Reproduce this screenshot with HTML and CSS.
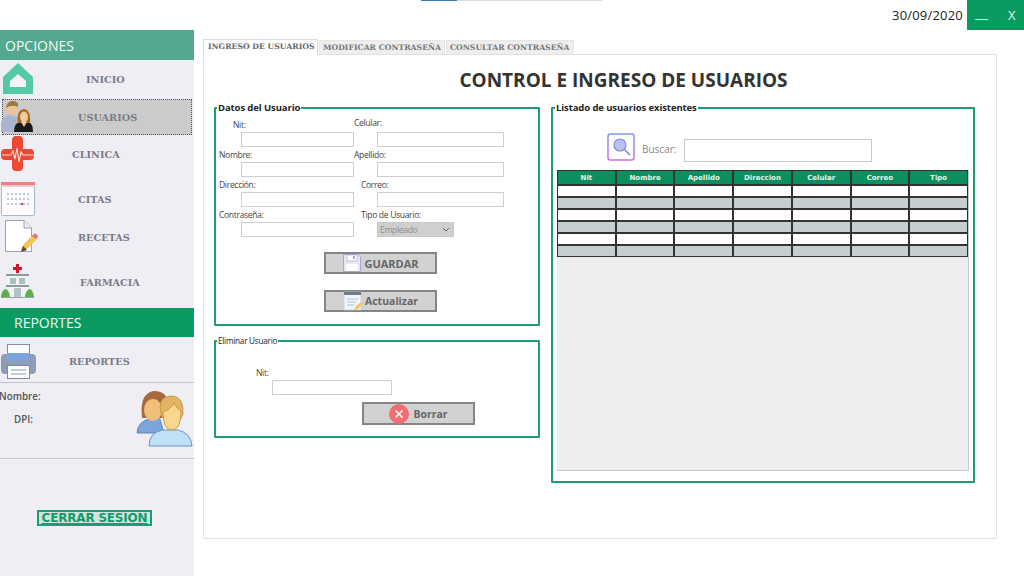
FILE: index.html
```html
<!DOCTYPE html>
<html lang="es">
<head>
<meta charset="utf-8">
<title>Control e ingreso de usuarios</title>
<link rel="stylesheet" href="styles.css">
</head>
<body>
<header class="topbar">
  <div class="sliver"><span class="sliver-blue"></span><span class="sliver-gray"></span></div>
  <div class="date">30/09/2020</div>
  <div class="winbtns"><span class="win-min">__</span><span class="win-close">X</span></div>
</header>
<div class="app">
  <aside class="sidebar">
    <div class="side-head side-head-opciones">OPCIONES</div>
    <div class="nav-item">
      <svg class="nav-icon" viewBox="0 0 40 38"><path d="M18 3 L33 17 V34 H3 V17 Z" fill="#55c8a8"/><path d="M18 14 L26 21 V27 H10 V21 Z" fill="#f4f4f8"/></svg>
      <span class="nav-label l-inicio">INICIO</span>
    </div>
    <div class="nav-item nav-active">
      <svg class="nav-icon" viewBox="0 0 40 36"><path d="M1 33 V23 Q3 17 10 16 L18 18 L20 33 Z" fill="#a9b4cf"/><circle cx="12" cy="10" r="6" fill="#e9c39a"/><path d="M6 9 Q7 1 14 2 Q19 3 18 8 Q12 5 6 9Z" fill="#9c7a3c"/><path d="M14 33 Q14 24 20 23 L29 23 Q33 25 33 33 Z" fill="#1b1b1b"/><path d="M18 24 Q16 11 24 10 Q31 11 30 24 Z" fill="#a9691f"/><ellipse cx="24" cy="18" rx="4" ry="5.5" fill="#f2c9a0"/><path d="M21 23 L24 28 L27 23 Z" fill="#f2c9a0"/></svg>
      <span class="nav-label l-usuarios">USUARIOS</span>
    </div>
    <div class="nav-item">
      <svg class="nav-icon" viewBox="0 0 40 38"><path d="M12 5 Q12 1 16 1 H19 Q23 1 23 5 V14 H30 Q34 14 34 18 V21 Q34 25 30 25 H23 V32 Q23 36 19 36 H16 Q12 36 12 32 V25 H5 Q1 25 1 21 V18 Q1 14 5 14 H12 Z" fill="#ea4a33"/><path d="M2 20 H11 L13 16 L15 24 L17 13 L19 27 L21 17 L23 20 H34" fill="none" stroke="#fbe0d8" stroke-width="1.1"/></svg>
      <span class="nav-label l-clinica">CLINICA</span>
    </div>
    <div class="nav-item nav-gap">
      <svg class="nav-icon" viewBox="0 0 40 38"><rect x="1.500" y="2.500" width="33" height="33" rx="1" fill="#fcfcfe" stroke="#a9b6c6"/><rect x="1" y="2" width="34" height="3" fill="#ee7f86"/><rect x="1" y="5" width="34" height="2" fill="#f6c9cc"/><path d="M7 14 H29 M7 19 H29 M7 24 H29" stroke="#b9cbd6" stroke-width="2" stroke-dasharray="2 2"/><rect x="21" y="23" width="2" height="2" fill="#d8434a"/></svg>
      <span class="nav-label l-citas">CITAS</span>
    </div>
    <div class="nav-item">
      <svg class="nav-icon" viewBox="0 0 40 38"><path d="M5.500 2.500 H24 L31.500 10 V33.500 H5.500 Z" fill="#fff" stroke="#9aa0ad"/><path d="M24 2.500 V10 H31.500" fill="#eef0f3" stroke="#9aa0ad"/><path d="M21 33 L23 27 L33 17 L37 21 L27 31 Z" fill="#f1c64e"/><path d="M32 18 L34 16 Q35 15 36 16 L38 18 Q38 19 37 20 L36 21 Z" fill="#e2737a"/><path d="M21 34 L23 28 L27 32 Z" fill="#5a4a2a"/></svg>
      <span class="nav-label l-recetas">RECETAS</span>
    </div>
    <div class="nav-item nav-gap">
      <svg class="nav-icon" viewBox="0 0 40 38"><path d="M16 1 h3 v3 h3 v3 h-3 v3 h-3 v-3 h-3 v-3 h3 Z" fill="#d4142a"/><rect x="6" y="11" width="23" height="2" fill="#8d9aa0"/><rect x="8" y="13" width="19" height="18" fill="#f2f3f4"/><rect x="10" y="15" width="6" height="6" fill="#a8bfc0"/><rect x="19" y="15" width="6" height="6" fill="#a8bfc0"/><rect x="6" y="22" width="23" height="2" fill="#8d9aa0"/><rect x="14" y="25" width="7" height="9" fill="#b3c3c6"/><path d="M1 34 Q2 26 6 26 Q9 27 10 34 Z M25 34 Q26 26 30 26 Q33 27 34 34 Z" fill="#5fb04a"/><rect x="1" y="34" width="33" height="1" fill="#9aa5a8"/></svg>
      <span class="nav-label l-farmacia">FARMACIA</span>
    </div>
    <div class="side-head side-head-reportes">REPORTES</div>
    <div class="nav-item nav-report">
      <svg class="nav-icon" viewBox="0 0 40 38"><rect x="7.500" y="1.500" width="22" height="14" fill="#fafbfd" stroke="#7f8ca6"/><rect x="1" y="11" width="35" height="20" rx="4" fill="#8e9cb8"/><path d="M7 10 H30 V15 Q30 18 27 18 H10 Q7 18 7 15 Z" fill="#7ba3dc"/><rect x="7.500" y="22.500" width="22" height="13" fill="#fafbfd" stroke="#7f8ca6"/><path d="M11 27 H26 M11 31 H26" stroke="#8e9cb8"/></svg>
      <span class="nav-label l-reportes">REPORTES</span>
    </div>
    <div class="user-info">
      <div class="user-text">
        <div class="user-nombre">Nombre:</div>
        <div class="user-dpi">DPI:</div>
      </div>
      <svg class="user-icon" viewBox="0 0 58 58">
        <path d="M1 43 Q2 31 14 29 H24 L28 43 Z" fill="#7ba6dc" stroke="#5d86bb"/>
        <path d="M6 28 Q3 3 18 1 Q30 1 32 12 L26 28 Z" fill="#a8693c"/>
        <ellipse cx="17" cy="20" rx="9" ry="11" fill="#f0bf7c"/>
        <path d="M13 56 Q13 43 26 40 H42 Q55 43 56 56 Z" fill="#bfe0f6" stroke="#6b93c4"/>
        <path d="M25 24 Q21 8 34 6 Q48 5 47 24 L44 30 H28 Z" fill="#e3b463" stroke="#c89a4c"/>
        <path d="M27 22 Q34 20 38 13 Q41 19 45 21 Q45 40 36 40 Q27 40 27 22 Z" fill="#fbd68f" stroke="#c89a4c"/>
      </svg>
    </div>
    <div class="logout"><a class="logout-link" href="#">CERRAR SESION</a></div>
  </aside>

  <main class="main">
    <nav class="tabs">
      <span class="tab tab-active">INGRESO DE USUARIOS</span>
      <span class="tab">MODIFICAR CONTRASEÑA</span>
      <span class="tab">CONSULTAR CONTRASEÑA</span>
    </nav>
    <section class="panel">
      <h1 class="title">CONTROL E INGRESO DE USUARIOS</h1>
      <div class="columns">
        <div class="col-left">
          <fieldset class="box box-datos">
            <legend class="legend-bold">Datos del Usuario</legend>
            <div class="form-grid">
              <label class="lbl-l lbl-nit">Nit:</label><label class="lbl-r lbl-up">Celular:</label>
              <input class="in-l" type="text"><input class="in-r" type="text">
              <label class="lbl-l">Nombre:</label><label class="lbl-r">Apellido:</label>
              <input class="in-l" type="text"><input class="in-r" type="text">
              <label class="lbl-l">Dirección:</label><label class="lbl-r lbl-shift">Correo:</label>
              <input class="in-l" type="text"><input class="in-r" type="text">
              <label class="lbl-l">Contraseña:</label><label class="lbl-r lbl-shift">Tipo de Usuario:</label>
              <input class="in-l" type="text">
              <div class="select"><span>Empleado</span><svg class="chev" viewBox="0 0 8 5"><path d="M1 1 L4 4 L7 1" fill="none" stroke="#666" stroke-width="1"/></svg></div>
            </div>
            <div class="btn-stack">
              <button class="btn" type="button">
                <svg class="btn-icon" viewBox="0 0 20 20"><path d="M1.500 1.500 H16 L18.500 4 V18.500 H1.500 Z" fill="#e6e6f6" stroke="#a9a9d8"/><rect x="5" y="2" width="10" height="6" fill="#fff" stroke="#a9a9d8" stroke-width=".7"/><rect x="11" y="3" width="2" height="3" fill="#a9a9d8"/><rect x="4" y="11" width="12" height="7" fill="#fff"/></svg>
                GUARDAR
              </button>
              <button class="btn" type="button">
                <svg class="btn-icon" viewBox="0 0 20 20"><rect x="1" y="1" width="17" height="18" fill="#f3f5fa" stroke="#c3c9d6" stroke-width=".7"/><rect x="1" y="1" width="17" height="3" fill="#6d7890"/><path d="M4 8 H15 M4 11 H13 M4 14 H11" stroke="#9fc1de"/><path d="M11 19 L13 15 L18 11 L20 13 L15 18 Z" fill="#f0c668"/></svg>
                <span class="btn-small">Actualizar</span>
              </button>
            </div>
          </fieldset>
          <fieldset class="box box-eliminar">
            <legend class="legend-thin">Eliminar Usuario</legend>
            <label class="del-label">Nit:</label>
            <input class="del-input" type="text">
            <div class="del-btn-row">
              <button class="btn btn-del" type="button">
                <svg class="btn-icon-del" viewBox="0 0 20 20"><circle cx="10" cy="10" r="10" fill="#ef6f73"/><path d="M6.500 6.500 L13.500 13.500 M13.500 6.500 L6.500 13.500" stroke="#fff" stroke-width="1.500"/></svg>
                <span class="btn-small">Borrar</span>
              </button>
            </div>
          </fieldset>
        </div>
        <fieldset class="box box-lista">
          <legend class="legend-bold">Listado de usuarios existentes</legend>
          <div class="search-row">
            <span class="search-btn"><svg class="search-icon" viewBox="0 0 28 28"><defs><linearGradient id="sg" x1="0" y1="0" x2="0" y2="1"><stop offset="0" stop-color="#7b9be8"/><stop offset="1" stop-color="#d06ce8"/></linearGradient></defs><rect x="1" y="1" width="26" height="26" rx="2.500" fill="#fff" stroke="url(#sg)" stroke-width="1.500"/><circle cx="13" cy="12" r="6" fill="#b7c2f4" stroke="#7f8cd8" stroke-width="1.200"/><path d="M17.500 16.500 L23 22" stroke="#7f7fb8" stroke-width="1.500"/></svg></span>
            <label class="search-label">Buscar:</label>
            <input class="search-input" type="text">
          </div>
          <div class="grid-wrap">
            <table class="users">
              <thead><tr><th>Nit</th><th>Nombre</th><th>Apellido</th><th>Direccion</th><th>Celular</th><th>Correo</th><th>Tipo</th></tr></thead>
              <tbody>
                <tr><td></td><td></td><td></td><td></td><td></td><td></td><td></td></tr>
                <tr class="alt"><td></td><td></td><td></td><td></td><td></td><td></td><td></td></tr>
                <tr><td></td><td></td><td></td><td></td><td></td><td></td><td></td></tr>
                <tr class="alt"><td></td><td></td><td></td><td></td><td></td><td></td><td></td></tr>
                <tr><td></td><td></td><td></td><td></td><td></td><td></td><td></td></tr>
                <tr class="alt"><td></td><td></td><td></td><td></td><td></td><td></td><td></td></tr>
              </tbody>
            </table>
          </div>
        </fieldset>
      </div>
    </section>
  </main>
</div>
</body>
</html>
```

FILE: styles.css
```css
* { box-sizing: border-box; }
html, body { margin: 0; padding: 0; }
body {
  width: 1024px; height: 576px; overflow: hidden; background: #fff;
  font-family: "Open Sans", "Liberation Sans", sans-serif; color: #444;
  display: flex; flex-direction: column;
}
.topbar { height: 30px; display: flex; align-items: center; justify-content: flex-end; flex: none; position: relative; }
.sliver { position: absolute; left: 421px; top: 0; display: flex; height: 1px; }
.sliver-blue { width: 36px; background: #3a7fb0; }
.sliver-gray { width: 146px; background: #ddd; }
.date { font-size: 13px; color: #222; margin-right: 4px; letter-spacing: .2px; }
.winbtns { width: 57px; height: 30px; background: #0b9a5f; color: #dff5ea; display: flex; font-size: 14px; }
.win-min { width: 34px; padding: 2px 0 0 8px; font-size: 15px; }
.win-close { padding: 6px 0 0 7px; font-size: 13px; }

.app { flex: 1; display: flex; min-height: 0; }
.sidebar { width: 194px; flex: none; background: #eeeef4; }
.side-head { color: #f2fbf7; font-size: 14px; display: flex; align-items: center; }
.side-head-opciones { height: 30px; background: #52a98f; padding-left: 5px; }
.side-head-reportes { height: 29px; margin-top: 7px; background: #0b9a5f; padding-left: 14px; }
.nav-item { height: 38px; display: flex; align-items: center; }
.nav-gap { margin-top: 7px; }
.nav-report { margin-top: 4px; height: 41px; }
.nav-active { height: 36px; margin: 1px 2px 0 2px; background: #cbcbcb; border: 1px dotted #555; }
.nav-active .nav-icon { margin-left: -3px; height: 36px; }
.nav-active .nav-label { margin-left: 38px; }
.nav-icon { width: 40px; height: 38px; flex: none; }
.nav-label { font-family: "DejaVu Serif", "Liberation Serif", serif; font-weight: bold; font-size: 9.700px; color: #7b7b86; }
.l-inicio { margin-left: 46px; }
.l-clinica { margin-left: 32px; }
.l-citas { margin-left: 38px; }
.l-recetas { margin-left: 38px; }
.l-farmacia { margin-left: 40px; }
.l-reportes { margin-left: 29px; }
.user-info { height: 77px; border-top: 1px solid #c4c4c8; border-bottom: 1px solid #c9c9cd; display: flex; justify-content: space-between; font-size: 9.800px; font-weight: 600; color: #555; }
.user-text { padding-top: 7px; }
.user-nombre { margin-left: -1px; line-height: 14px; }
.user-dpi { margin: 9px 0 0 14px; line-height: 14px; }
.user-icon { width: 58px; height: 58px; margin-top: 7px; }
.logout { display: flex; padding: 51px 0 0 37px; }
.logout-link { border: 2px solid #17a077; background: #d4e4dc; height: 16px; width: 115px; display: block; text-align: center; font-family: "DejaVu Sans", sans-serif; font-weight: bold; font-size: 12px; letter-spacing: -.2px; line-height: 12px; color: #0f9b6e; text-decoration: underline; white-space: nowrap; overflow: hidden; }

.main { flex: 1; padding: 9px 28px 37px 9px; display: flex; flex-direction: column; }
.tabs { display: flex; height: 15px; align-items: flex-end; position: relative; z-index: 1; }
.tab { font-family: "DejaVu Serif", "Liberation Serif", serif; font-weight: bold; font-size: 7.700px; color: #777; background: #eee; height: 14px; line-height: 14px; padding: 0 3px; margin-right: 1px; white-space: nowrap; border: 1px solid #e6e6e6; border-bottom: 0; }
.tab-active { height: 16px; width: 115px; padding: 0 4px; background: #fff; color: #666; margin-bottom: -1px; border-color: #dcdcdc; }
.panel { flex: 1; border: 1px solid #e2e2e2; background: #fff; padding: 0 21px 0 10px; }
.title { margin: 13px 0 0; height: 25px; font-size: 19px; line-height: 25px; font-weight: 700; color: #333; text-align: center; padding-left: 58px; white-space: nowrap; }
.columns { display: flex; gap: 11px; margin-top: 9px; align-items: flex-start; }
.col-left { width: 326px; display: flex; flex-direction: column; gap: 9px; }

.box { margin: 0; min-width: 0; border: 2px solid #1d9c78; border-radius: 1px; }
.box legend { padding: 0 1px; line-height: 12px; color: #222; white-space: nowrap; }
.legend-bold { font-size: 9.500px; letter-spacing: -.1px; font-weight: 700; margin-left: -2px; }
.legend-thin { font-size: 8.200px; letter-spacing: -.25px; margin-left: 1px; }
.box-datos { height: 224px; padding: 0 0 0 3px; }
.box-eliminar { height: 103px; padding: 0; }
.box-lista { width: 424px; height: 381px; padding: 0 4px; }

.form-grid { display: grid; grid-template-columns: 22px 113px 23px 127px; grid-auto-rows: 15px; font-size: 8.500px; letter-spacing: -.3px; color: #444; margin-top: 3px; }
.form-grid label { line-height: 15px; white-space: nowrap; }
.lbl-l { grid-column: 1 / 3; }
.lbl-r { grid-column: 3 / 5; }
.lbl-nit { padding-left: 14px; }
.lbl-shift { padding-left: 7px; }
.lbl-up { margin-top: -2px; }
input { border: 1px solid #cfcfcf; background: #fff; margin: 0; padding: 0; display: block; outline: none; }
.in-l { grid-column: 2; height: 15px; width: 113px; }
.in-r { grid-column: 4; height: 15px; width: 127px; }
.select { grid-column: 4; width: 77px; height: 15px; background: #cfcfcf; color: #8e8e8e; border: 1px solid #c8c8c8; display: flex; align-items: center; justify-content: space-between; padding: 0 3px 0 2px; font-size: 8.500px; letter-spacing: -.3px; }
.chev { width: 8px; height: 5px; }

.btn-stack { display: flex; flex-direction: column; gap: 16px; margin: 15px 0 0 105px; }
.btn { width: 113px; height: 22px; background: #d2d2d2; border: 2px solid #858585; display: flex; align-items: center; justify-content: center; gap: 2px; padding: 0; font-family: "Open Sans", "Liberation Sans", sans-serif; font-size: 11px; font-weight: 700; color: #666; }
.btn-small { font-size: 10.500px; }
.btn-icon { width: 20px; height: 20px; flex: none; }
.btn-icon-del { width: 20px; height: 20px; flex: none; margin-right: 2px; }
.del-label { display: block; font-size: 8.500px; letter-spacing: -.3px; color: #444; margin: 20px 0 0 40px; line-height: 12px; }
.del-input { width: 120px; height: 15px; margin: 1px 0 0 56px; }
.del-btn-row { margin: 7px 0 0 146px; }
.btn-del { height: 23px; }

.search-row { display: flex; align-items: center; height: 28px; margin-top: 19px; }
.search-btn { margin-left: 50px; width: 28px; height: 28px; }
.search-icon { width: 28px; height: 28px; display: block; }
.search-label { margin: 3px 0 0 7px; width: 42px; font-size: 10px; color: #888; }
.search-input { width: 188px; height: 23px; margin-top: 6px; border-color: #c8c8c8; }
.grid-wrap { margin-top: 9px; height: 301px; background: #eee; border: solid #c9c9c9; border-width: 0 1px 1px 0; }
.users { width: 100%; table-layout: fixed; border-collapse: separate; border-spacing: 0; background: #333; }
.users th { height: 15px; padding: 0; background: #0b8f5f; color: #e6f4ee; font-family: "DejaVu Sans", sans-serif; font-size: 7px; font-weight: 700; border: 1px solid #333; }
.users td { height: 12px; padding: 0; background: #fff; border: 1px solid #333; }
.users .alt td { background: #c5cdcf; }
```
